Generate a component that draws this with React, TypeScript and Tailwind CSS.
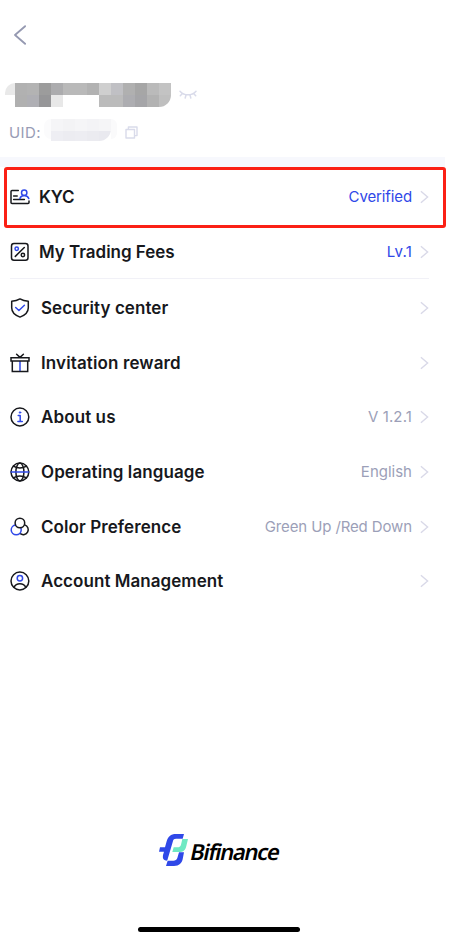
import type { ReactNode } from 'react'
import clsx from 'clsx'

interface MenuItem {
  label: string
  icon: ReactNode
  value?: string
  highlight?: boolean
  tracking: string
  valueTracking?: string
}

const INK = '#17181c'
const BLUE = '#2f48e8'

function Icon({ children }: { children: ReactNode }) {
  return (
    <svg
      className="h-5 w-5 shrink-0"
      viewBox="0 0 20 20"
      fill="none"
      stroke={INK}
      strokeWidth="1.5"
      strokeLinecap="round"
      strokeLinejoin="round"
    >
      {children}
    </svg>
  )
}

const kycIcon = (
  <Icon>
    <path d="M8.3 3.5H2a1 1 0 0 0-1 1v11a1 1 0 0 0 1 1h16a1 1 0 0 0 1-1v-1.6M3.6 9h3.6M3.6 12.6h10.8" />
    <circle cx="14.2" cy="5.8" r="2.7" stroke={BLUE} />
    <path d="M9.9 11.6c.5-2 2-3.1 4.3-3.1s3.9 1.1 4.6 3.1" stroke={BLUE} />
  </Icon>
)

const feesIcon = (
  <Icon>
    <rect x="1.5" y="1.5" width="16.5" height="16.7" rx="2.5" />
    <path d="M14.3 5.5 5.3 14.4" />
    <circle cx="6.7" cy="6.7" r="1.7" stroke={BLUE} />
    <circle cx="12.9" cy="13" r="1.7" />
  </Icon>
)

const securityIcon = (
  <Icon>
    <path d="M10 .9c2.5 1.5 5.3 2.2 8.3 2.4v6.5c0 4.4-3.2 7.5-8.3 9.3-5.1-1.8-8.3-4.9-8.3-9.3V3.3C4.700 3.100 7.500 2.400 10 .9Z" />
    <path d="m5.7 9.5 3.2 3 5.5-5.2" stroke={BLUE} />
  </Icon>
)

const rewardIcon = (
  <Icon>
    <path d="M10 8v10" stroke={BLUE} strokeLinecap="butt" />
    <path d="M1 4.7h18v3.2H1zM2.3 8h15.4v10.4H2.3zM6.6 1.3 10 4.4l3.4-3.1" strokeLinejoin="miter" />
  </Icon>
)

const aboutIcon = (
  <Icon>
    <circle cx="9.9" cy="10" r="8.9" />
    <path d="M8.2 8.4h2v5.8M7.9 14.4h4.4" stroke={BLUE} />
    <circle cx="10" cy="5.5" r=".8" fill={BLUE} stroke={BLUE} strokeWidth=".8" />
  </Icon>
)

const languageIcon = (
  <Icon>
    <circle cx="9.9" cy="10" r="8.9" />
    <ellipse cx="9.9" cy="10" rx="4" ry="8.9" />
    <path d="M3.3 4.2c4 2.3 9.2 2.3 13.2 0M3.3 15.8c4-2.3 9.2-2.3 13.2 0" />
    <path d="M1.2 10h17.4" stroke={BLUE} />
  </Icon>
)

const colorIcon = (
  <Icon>
    <path d="M14.8 7.9a5 5 0 1 1-4.5 8.8" />
    <path d="M5.7 7.9a5 5 0 1 0 5.5 5.2c0-.7-.1-1.3-.3-1.9" stroke={BLUE} />
    <circle cx="9.9" cy="6" r="4.8" />
  </Icon>
)

const accountIcon = (
  <Icon>
    <circle cx="9.9" cy="10" r="8.9" />
    <circle cx="9.9" cy="7.3" r="2.7" stroke={BLUE} />
    <path d="M4 16.4c1.2-2.6 3.3-3.7 5.9-3.7s4.7 1.1 5.9 3.7" />
  </Icon>
)

const topItems: MenuItem[] = [
  { label: 'KYC', icon: kycIcon, value: 'Cverified', highlight: true, tracking: 'tracking-[-0.15px]', valueTracking: 'tracking-[-0.12px]' },
  { label: 'My Trading Fees', icon: feesIcon, value: 'Lv.1', highlight: true, tracking: 'tracking-[-0.02px]', valueTracking: 'tracking-[0.2px]' },
]

const menuItems: MenuItem[] = [
  { label: 'Security center', icon: securityIcon, tracking: 'tracking-[0.05px]' },
  { label: 'Invitation reward', icon: rewardIcon, tracking: 'tracking-[0.12px]' },
  { label: 'About us', icon: aboutIcon, value: 'V 1.2.1', tracking: 'tracking-[0.1px]', valueTracking: 'tracking-[0.12px]' },
  { label: 'Operating language', icon: languageIcon, value: 'English', tracking: 'tracking-[0.1px]' },
  { label: 'Color Preference', icon: colorIcon, value: 'Green Up /Red Down', tracking: 'tracking-[0.08px]', valueTracking: 'tracking-[-0.12px]' },
  { label: 'Account Management', icon: accountIcon, tracking: 'tracking-[0.05px]' },
]

// Masked account name and UID, one color per block
const nameTop = ['#b1b1b1', '#b3b3b3', '#9c9c9c', '#acacae', '#b9b9b9', '#b9b9b9', '#b2b2b2', '#cfcfcf', '#c0c0c4', '#b0b0b0', '#a6a6a6', '#bababa', '#c3c3c3']
const nameBottom = ['#b0b0b0', '#afafb4', '#969698', '#e8e8e8', '#ffffff', '#ffffff', '#ffffff', '#bbbbbb', '#bbbbbb', '#adadb1', '#a5a5a8', '#b2b2b2', '#bfbfbf']
const uidTop = ['#f5f5f7', '#f3f3f5', '#f5f5f7', '#f3f3f6', '#f5f5f7']
const uidBottom = ['#eeeef3', '#ececf1', '#ededf2', '#ebebf0', '#e9e9ef']

function Blocks({ colors, height }: { colors: string[]; height: string }) {
  return (
    <div className="flex">
      {colors.map((color, i) => (
        <span key={i} className={clsx('w-3', height)} style={{ backgroundColor: color }} />
      ))}
    </div>
  )
}

function Row({ item, gap }: { item: MenuItem; gap: string }) {
  return (
    <div className="flex h-full items-center">
      {item.icon}
      <span className={clsx('whitespace-nowrap text-[17px] leading-5 font-[560] text-[#17181c]', gap, item.tracking)}>
        {item.label}
      </span>
      {item.value && (
        <span
          className={clsx(
            'ml-auto whitespace-nowrap text-[15px] leading-5',
            item.highlight ? 'text-[#2f48e8]' : 'text-[#9c9fb8]',
            item.valueTracking,
          )}
        >
          {item.value}
        </span>
      )}
      <svg className={clsx('h-[14px] w-[9px] shrink-0', item.value ? 'ml-2' : 'ml-auto')} viewBox="0 0 9 14" fill="none" stroke="#d9d9e8" strokeWidth="1.4">
        <path d="m.9 1.2 6.7 5.8L.9 12.8" />
      </svg>
    </div>
  )
}

export default function App() {
  return (
    <div className="flex h-[936px] w-[453px] flex-col overflow-hidden bg-white font-[Inter,sans-serif]">
      {/* Header */}
      <header className="h-[157px] shrink-0">
        <svg className="mt-[25px] ml-[13px] block h-5 w-[14px]" viewBox="0 0 14 20" fill="none" stroke="#9599b1" strokeWidth="1.8" strokeLinecap="round" strokeLinejoin="round">
          <path d="M12.1 1.2 2 10l10.1 8.8" />
        </svg>

        <div className="mt-[38px] ml-[5px] flex h-6">
          <span className="h-3 w-[10px] rounded-tl-full bg-[#e9e9e9]" />
          <div className="overflow-hidden rounded-br-[12px]">
            <Blocks colors={nameTop} height="h-3" />
            <Blocks colors={nameBottom} height="h-3" />
          </div>
          <svg className="mt-[7px] ml-2 h-[10px] w-[18px]" viewBox="0 0 18 10" fill="none" stroke="#d9dbea" strokeWidth="1.5" strokeLinecap="round">
            <path d="M1 1.2c4.2 4.8 11.8 4.8 16 0M3.4 3.5 1.3 5.7M7 5l-.8 3M11 5l.8 3M14.6 3.5l2.1 2.2" />
          </svg>
        </div>

        <div className="mt-3 flex h-[23px] items-start">
          <span className="mt-1 ml-[9px] w-[35px] whitespace-nowrap text-[15px] leading-5 tracking-[0.4px] text-[#989cb5]">UID:</span>
          <div className="flex">
            <span className="h-5 w-[7px] rounded-l-full bg-[#fbfbfc]" />
            <div className="overflow-hidden rounded-br-xl">
              <Blocks colors={uidTop} height="h-3" />
              <Blocks colors={uidBottom} height="h-[10px]" />
            </div>
            <span className="h-5 w-[6px] rounded-r-full bg-[#fafafb]" />
          </div>
          <svg className="mt-[7px] ml-2 h-[13px] w-[13px]" viewBox="0 0 13 13" fill="none" stroke="#d9dbea" strokeWidth="1.4" strokeLinejoin="round">
            <path d="M1 3.5h8.5V12H1zM3.400 3.300V1H12v8.600H9.700" />
          </svg>
        </div>
      </header>

      <div className="h-[10px] w-[445px] shrink-0 bg-[#f7f8fd]" />

      {/* Verification and fees */}
      <div className="ml-1 h-[61px] w-[442px] shrink-0 rounded-[3px] border-3 border-[#fb2015] pr-[14px] pb-px pl-[3px]">
        <Row item={topItems[0]} gap="ml-[9px]" />
      </div>
      <div className="ml-[10px] h-[51px] w-[419px] shrink-0 border-b border-[#f1f1f7]">
        <div className="h-12">
          <Row item={topItems[1]} gap="ml-[9px]" />
        </div>
      </div>

      <div className="mt-[2px] ml-[10px] w-[419px] shrink-0">
        {menuItems.map((item) => (
          <div key={item.label} className="h-[54.6px]">
            <Row item={item} gap="ml-[11px]" />
          </div>
        ))}
      </div>

      {/* Brand */}
      <footer className="mt-auto flex flex-col items-center pb-1 pr-[15px]">
        <div className="flex h-8 items-center gap-[3px]">
          <svg className="h-8 w-[29px]" viewBox="57 42 87 96">
            <path
              d="M132 42h-24C92 42 84 50 80 64l-5 18H60l-3 13h15l-3 10c-2 10 1 16 10 17l3-1 17-58c1-5 4-7 9-7h20Z"
              fill="#2f48e8"
            />
            <path d="M132 97h-15l-5 17c-2 6-6 8-12 8H83l-5 16h24c16 0 23-8 26-20Z" fill="#2f48e8" />
            <path d="M144 57h-17l-4 17c-2 6-5 8-11 8h-11l-4 14h20c14 0 19-6 22-18Z" fill="#6fe9c3" />
          </svg>
          <span className="mt-[2px] inline-block -skew-x-12 whitespace-nowrap font-['Noto_Sans',sans-serif] text-[22px] leading-8 font-semibold tracking-[-1.3px] text-black">
            Bifinance
          </span>
        </div>
        <div className="mt-[61px] h-[5px] w-[162px] rounded-full bg-black" />
      </footer>
    </div>
  )
}
